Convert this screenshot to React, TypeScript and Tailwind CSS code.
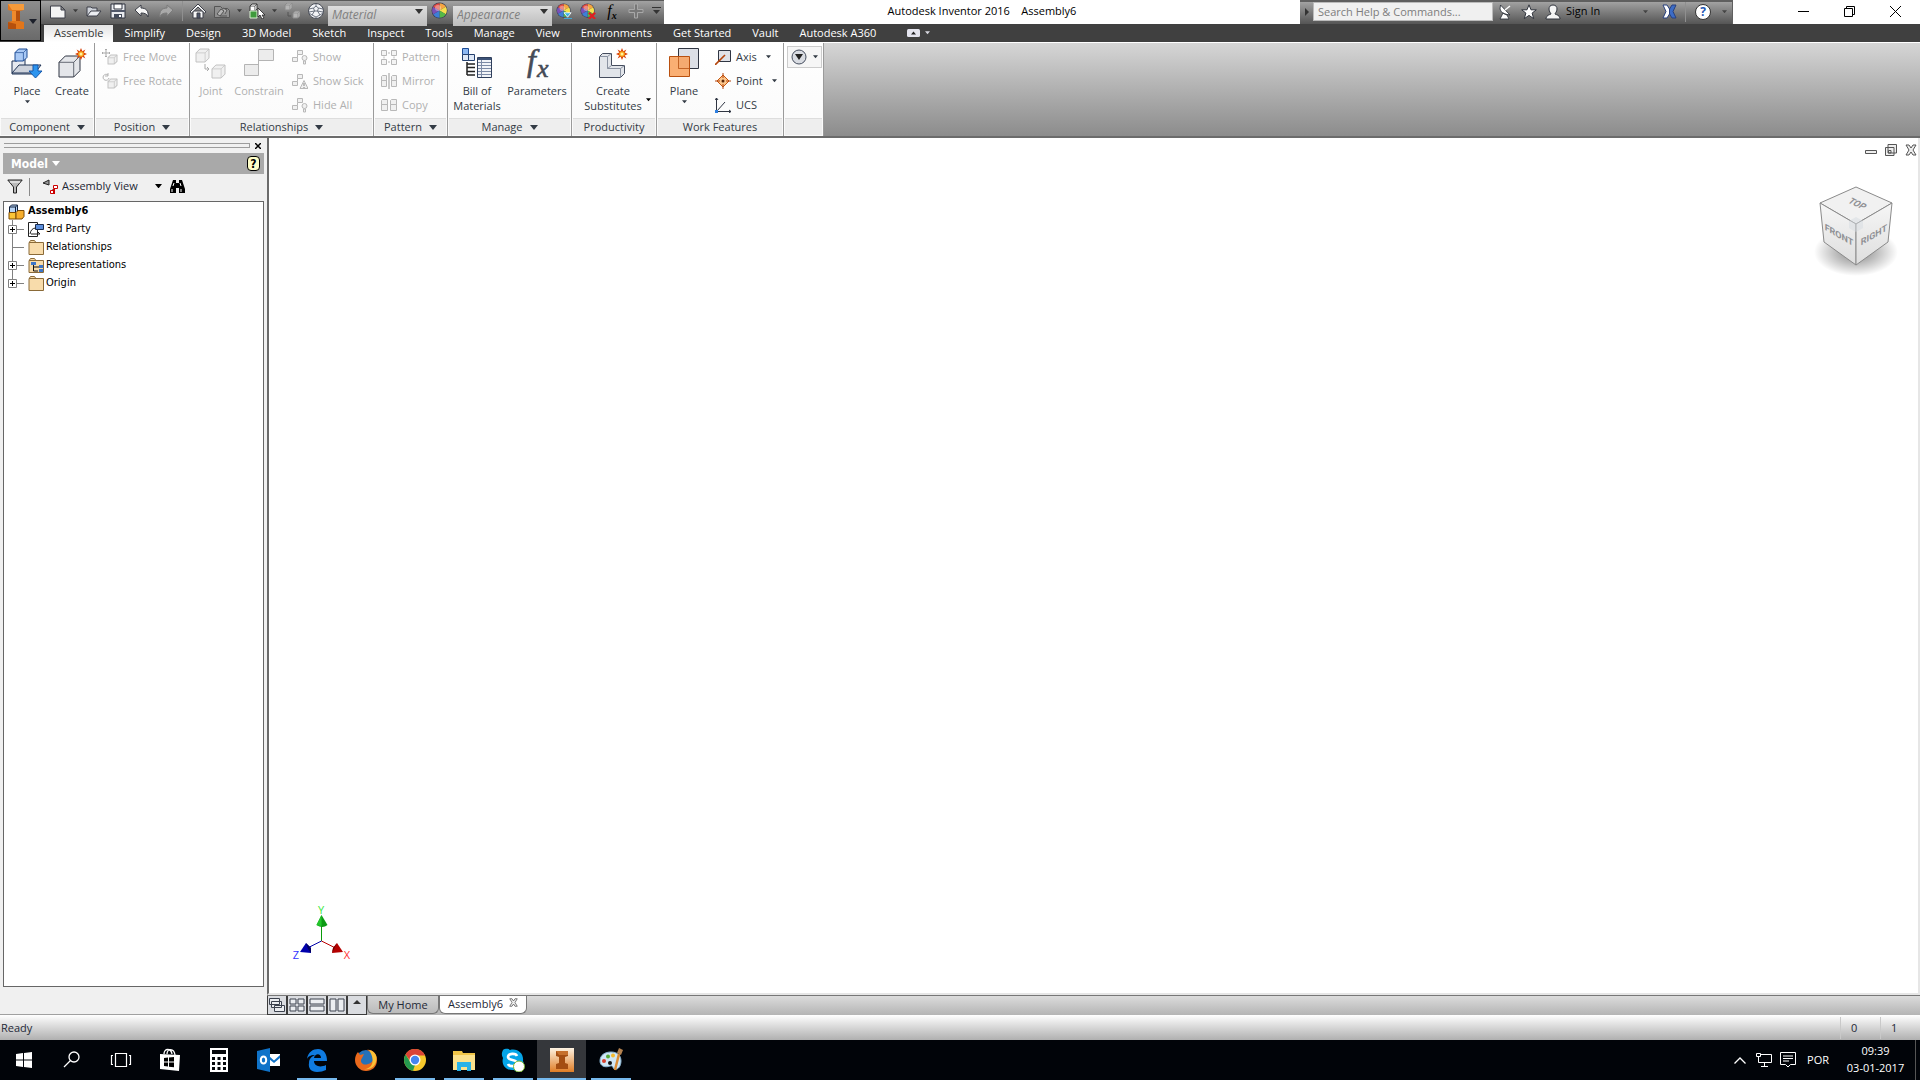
import type { ReactNode } from 'react'
import clsx from 'clsx'

const tabs = [
  'Assemble', 'Simplify', 'Design', '3D Model', 'Sketch', 'Inspect', 'Tools', 'Manage',
  'View', 'Environments', 'Get Started', 'Vault', 'Autodesk A360',
]

/* ---------- small shared pieces ---------- */

function Caret({ size = 6, className = '' }: { size?: number; className?: string }) {
  return (
    <svg width={size} height={size / 2 + 1} viewBox="0 0 8 5" className={clsx('shrink-0', className)}>
      <path d="M0 0h8L4 5z" fill="currentColor" />
    </svg>
  )
}

function Burst({ x, y }: { x: number; y: number }) {
  return (
    <g transform={`translate(${x} ${y})`}>
      <path d="M0-6 1.4-2.8 4.4-4.4 2.8-1.4 6 0 2.8 1.4 4.4 4.4 1.4 2.8 0 6-1.4 2.8-4.4 4.4-2.8 1.4-6 0-2.8-1.4-4.4-4.4-1.4-2.8z" fill="#d9420b" />
      <circle r="2.8" fill="#f9a61a" />
      <circle r="1.5" fill="#fff3a0" />
    </g>
  )
}

function Cube({ x, y, s, stroke = '#c2c2c2', fill = '#f0f0f0' }: { x: number; y: number; s: number; stroke?: string; fill?: string }) {
  return (
    <g transform={`translate(${x} ${y}) scale(${s})`} fill={fill} stroke={stroke} strokeWidth={1 / s} strokeLinejoin="round">
      <path d="M0 3 3 0h7v7l-3 3H0z" />
      <path d="M0 3h7l3-3M7 3v7" fill="none" opacity=".7" />
    </g>
  )
}

function Wheel({ size = 18, children }: { size?: number; children?: ReactNode }) {
  return (
    <svg width={size} height={size} viewBox="0 0 18 18" className="shrink-0">
      <circle cx="8.5" cy="8.5" r="8" fill="#3a3f52" />
      <path d="M8.5 8.5V1.2a7.3 7.3 0 0 1 6.3 3.6z" fill="#f7a541" />
      <path d="M8.5 8.5l6.3-3.7a7.3 7.3 0 0 1 0 7.4z" fill="#f6e04d" />
      <path d="M8.5 8.5l6.3 3.7a7.3 7.3 0 0 1-6.3 3.6z" fill="#55b947" />
      <path d="M8.5 8.5v7.3a7.3 7.3 0 0 1-6.3-3.6z" fill="#3e7fd6" />
      <path d="M8.5 8.5l-6.3 3.7a7.3 7.3 0 0 1 0-7.4z" fill="#7a51b8" />
      <path d="M8.5 8.5L2.2 4.8a7.3 7.3 0 0 1 6.3-3.6z" fill="#e34b43" />
      <circle cx="7" cy="6" r="3" fill="#fff" opacity=".35" />
      {children}
    </svg>
  )
}

/* ---------- quick access toolbar ---------- */

const qatIcons: Record<string, ReactNode> = {
  New: <path d="M.5 3h10.500l4 4v8H.5zM11 3v4h4" fill="#f4f4f4" stroke="#3c3f48" />,
  Open: (
    <g stroke="#3c3f48" strokeLinejoin="round">
      <path d="M1 13V4h4l1 1h5v3" fill="#cfd3da" />
      <path d="M1 13 5 8h10l-4 5z" fill="#eceef2" />
    </g>
  ),
  Save: (
    <g>
      <path d="M1 1h14v14H1z" fill="#e8eaee" stroke="#2f333f" />
      <path d="M4 1h8v5H4z" fill="#fff" stroke="#2f333f" />
      <path d="M1 7h14v2H1z" fill="#51586a" />
      <path d="M4 11h8v4H4z" fill="#444b5b" />
      <path d="M9 12h2v2H9z" fill="#fff" />
    </g>
  ),
  Undo: <path d="M1 7l6-5v3c5 0 8 3 7 9-1-3-3-4-7-4v3z" fill="#f6f6f6" stroke="#3c3f48" strokeLinejoin="round" />,
  Redo: <path d="M15 7L9 2v3c-5 0-8 3-7 9 1-3 3-4 7-4v3z" fill="#a9a9a9" stroke="#7b7b7b" strokeLinejoin="round" />,
  Home: (
    <g stroke="#3c3f48" strokeLinejoin="round">
      <path d="M3 8h10v7H3z" fill="#f6f6f6" />
      <path d="M8 1l8 8-1.500 1L8 4 1.500 10 0 9z" fill="#fff" />
      <path d="M7 10h3v5H7z" fill="#4e566b" />
    </g>
  ),
  Update: (
    <g stroke="#555">
      <path d="M.5 3.500h6l2 2h5l2 2v7H.5z" fill="#909090" />
      <path d="M3 11l4-5 3 2-4 5zM9 5l4 2-2 4M6 13h7" fill="#b4b4b4" />
    </g>
  ),
  Select: (
    <g>
      <Cube x={1} y={1} s={0.7} stroke="#333" fill="#fff" />
      <path d="M1 8h7v7H1z" fill="#3f9a3c" stroke="#d8f0d0" />
      <path d="M9 5v9l2-2 2 4 2-1-2-3h3z" fill="#fff" stroke="#222" strokeWidth=".8" />
    </g>
  ),
  Relationship: (
    <g>
      <Cube x={1} y={0} s={0.7} stroke="#8b8b8b" fill="#b5b5b5" />
      <Cube x={9} y={8} s={0.7} stroke="#8b8b8b" fill="#b5b5b5" />
      <path d="M4 9v4h3" stroke="#555" fill="none" />
    </g>
  ),
  Sphere: (
    <g>
      <circle cx="8" cy="8" r="7.500" fill="#f2f3f6" stroke="#4a4e58" />
      <path d="M5.500 5L8 3.200 10.500 5l-1 3h-3zM1 6l4.500-1M8 3.200V.8M10.500 5L15 6M9.500 8l2.500 4M6.500 8L4 12M4 12l-3-2M12 12l3-2M4 12l4 2 4-2M8 14v1.500M6.500 8L1 9M9.500 8l5.500 1" stroke="#5f6674" fill="none" strokeWidth=".9" />
    </g>
  ),
}

function QatButton({ name, menu }: { name: string; menu?: boolean }) {
  return (
    <button aria-label={name} className="flex items-center">
      <span className="flex w-6 justify-center">
        <svg width="16" height="16" viewBox="0 0 16 16">{qatIcons[name]}</svg>
      </span>
      {menu && <span className="flex w-[11px] justify-center text-[#3c3c3c]"><Caret size={5} /></span>}
    </button>
  )
}

function StyleSelect({ label }: { label: string }) {
  return (
    <div className="relative h-5 w-[99px]">
      <select
        aria-label={label}
        className="h-full w-full appearance-none bg-linear-to-b from-[#dedede] to-[#bdbdbd] pb-0.5 pl-1 text-xs leading-4 italic text-[#808080]"
      >
        <option>{label}</option>
      </select>
      <Caret size={8} className="pointer-events-none absolute top-2 right-1 text-[#333]" />
    </div>
  )
}

function QuickAccess() {
  return (
    <div className="flex h-6 w-[623px] items-center border-t border-[#5a5a5a] bg-linear-to-b from-[#a2a2a2] to-[#5b5b5b] pb-[3px] pl-[5px]">
      <QatButton name="New" menu />
      <span className="w-px" />
      <QatButton name="Open" />
      <QatButton name="Save" />
      <QatButton name="Undo" />
      <QatButton name="Redo" />
      <span className="mr-[3px] ml-1 h-5 w-px bg-[#8f8f8f]" />
      <QatButton name="Home" />
      <QatButton name="Update" menu />
      <QatButton name="Select" menu />
      <QatButton name="Relationship" />
      <QatButton name="Sphere" />
      <StyleSelect label="Material" />
      <button aria-label="Color" className="flex w-[26px] justify-center"><Wheel /></button>
      <StyleSelect label="Appearance" />
      <button aria-label="Adjust" className="flex w-6 justify-center">
        <Wheel size={16}><path d="M9 11h8l-4 5z" fill="#39b2e6" stroke="#fff" /><path d="M9 17.500h9" stroke="#39b2e6" /></Wheel>
      </button>
      <button aria-label="Clear" className="flex w-6 justify-center">
        <Wheel size={16}><path d="M10 11l7 7M17 11l-7 7" stroke="#e02020" strokeWidth="2.500" /></Wheel>
      </button>
      <button aria-label="Parameters" className="w-6 font-['Liberation_Serif'] text-base leading-none text-black italic">f<sub className="text-[10px] font-bold">x</sub></button>
      <button aria-label="Add" className="flex w-6 justify-center">
        <svg width="16" height="16" viewBox="0 0 16 16"><path d="M6.500 1h3v5.500H15v3H9.500V15h-3V9.500H1v-3h5.500z" fill="#777" stroke="#a8a8a8" /></svg>
      </button>
      <button aria-label="Customize" className="flex w-4 justify-center">
        <svg width="9" height="8" viewBox="0 0 9 8"><path d="M0 .5h9" stroke="#333" /><path d="M1 3h7L4.500 7z" fill="#333" /></svg>
      </button>
    </div>
  )
}

function InfoCenter() {
  return (
    <div className="flex h-6 w-[433px] items-center border-t-2 border-r border-[#5f5f5f] bg-linear-to-b from-[#a2a2a2] to-[#555] pb-[3px]">
      <span className="flex w-[13px] justify-center"><svg width="4" height="8"><path d="M0 0v8l4-4z" fill="#333" /></svg></span>
      <input
        type="text"
        aria-label="Search"
        placeholder="Search Help &amp; Commands..."
        className="h-[19px] w-[180px] border border-[#bbb] bg-[#f0f0f0] px-1 text-[11px] placeholder:text-[#7d7d7d]"
      />
      <button aria-label="Communication Center" className="flex w-6 justify-center">
        <svg width="14" height="16" viewBox="0 0 14 16" fill="#fff" stroke="#30343d" strokeWidth=".9"><path d="M5 9l-3 6h9l-2-4zM2.500 1q-3 9 9.500 10z" /><path d="M7 6l5-4" stroke="#fff" strokeWidth="1.500" /></svg>
      </button>
      <button aria-label="Favorites" className="flex w-6 justify-center">
        <svg width="16" height="16" viewBox="0 0 16 16"><path d="M8 .8l2 5h5.300l-4.200 3.300 1.600 5.500L8 11.400l-4.700 3.200 1.600-5.500L.7 5.800H6z" fill="#fff" stroke="#30343d" /></svg>
      </button>
      <button className="flex items-center gap-[5px] pl-1 text-[11px] text-black">
        <svg width="16" height="16" viewBox="0 0 16 16" fill="#f4f4f4" stroke="#30343d"><path d="M8 1c3 0 4 2 4 4 0 3-2 4-2 5 2 1 4 1 5 4v1H1v-1c1-3 3-3 5-4 0-1-2-2-2-5 0-2 1-4 4-4z" /></svg>
        Sign In
      </button>
      <span className="ml-auto flex w-3 justify-center text-[#444]"><Caret size={5} /></span>
      <button aria-label="Exchange Apps" className="ml-1 flex w-7 justify-center">
        <svg width="15" height="15" viewBox="0 0 15 15"><path d="M1 1h4l2.500 4v5L5 14H1l3-6.500z" fill="#fff" stroke="#28407e" /><path d="M14 1h-4L7.500 5v5L10 14h4l-3-6.500z" fill="#3c6cc6" stroke="#28407e" /></svg>
      </button>
      <span className="mr-1 ml-0.5 h-5 w-px bg-[#8f8f8f]" />
      <button aria-label="Help" className="flex items-center">
        <span className="mx-[5px] flex size-4 items-center justify-center rounded-full border border-[#333] bg-white text-xs font-bold text-[#2457b5]">?</span>
        <span className="flex w-4 justify-center text-[#444]"><Caret size={5} /></span>
      </button>
    </div>
  )
}

function Header() {
  return (
    <header className="flex bg-[#404040]">
      <button aria-label="Application menu" className="flex h-[41px] w-[41px] items-start gap-1 border border-black bg-linear-to-b from-[#8d8d8d] to-[#6a6a6a] pt-0.5 pl-1.5 text-[#1b1f2a]">
        <svg width="18" height="27" viewBox="0 0 18 27">
          <path d="M1 1h16v6l-4 1v10l4 1v7H1v-7l4-1V8L1 7z" fill="#e2761b" />
          <path d="M1 1h16v6H5z" fill="#f59a3a" />
          <path d="M9 8h4v10H9zM1 19l8 2v5H1z" fill="#b6500d" />
          <path d="M5 8h4v10H5z" fill="#f08a2c" />
        </svg>
        <Caret size={8} className="mt-4" />
      </button>
      <div className="min-w-0 flex-1">
        <div className="flex h-6 bg-white">
          <QuickAccess />
          <h1 className="flex-1 text-center text-[11px] leading-[22px] whitespace-pre text-black">Autodesk Inventor 2016    Assembly6</h1>
          <InfoCenter />
          <div className="ml-[47px] flex pr-0.5 pb-0.5">
            <button aria-label="Minimize" className="flex w-[46px] items-center justify-center"><svg width="11" height="11"><path d="M0 5.500h11" stroke="#000" /></svg></button>
            <button aria-label="Restore" className="flex w-[46px] items-center justify-center"><svg width="11" height="11" fill="none" stroke="#000"><path d="M.5 2.500h8v8h-8zM2.500 2.500v-2h8v8h-2" /></svg></button>
            <button aria-label="Close" className="flex w-[46px] items-center justify-center"><svg width="11" height="11"><path d="M0 0l11 11M11 0L0 11" stroke="#000" /></svg></button>
          </div>
        </div>
        <nav className="flex h-[18px] items-end gap-px pl-[3px] text-[11px] leading-[15px]">
          {tabs.map((tab, i) => (
            <button
              key={tab}
              className={clsx('px-2.5 pb-0.5 whitespace-nowrap', i === 0 ? 'bg-linear-to-b from-[#e4e4e4] to-white text-[#333]' : 'text-white')}
            >
              {tab}
            </button>
          ))}
          <button aria-label="Minimize ribbon" className="flex h-[18px] items-center gap-[5px] pl-5 text-[#d8d8e0]">
            <svg width="13" height="8" viewBox="0 0 13 8"><rect width="13" height="8" rx="1.500" fill="#e4e4ee" /><path d="M4 5.500h5L6.500 2.500z" fill="#222" /></svg>
            <Caret size={5} />
          </button>
        </nav>
      </div>
    </header>
  )
}

/* ---------- ribbon ---------- */

const smallIcons: Record<string, ReactNode> = {
  'Free Move': <><Cube x={6} y={6} s={0.9} /><path d="M4 0v8M0 4h8M3 1l1-1 1 1M3 7l1 1 1-1M1 3L0 4l1 1M7 3l1 1-1 1" stroke="#a9a9a9" fill="none" /></>,
  'Free Rotate': <><Cube x={6} y={6} s={0.9} /><path d="M6 2a3 3 0 1 0 1 3M6 0v3H3" stroke="#b3b3b3" fill="none" /></>,
  Show: <Link><circle cx="12.500" cy="9" r="2.500" /><path d="M11.500 12h2v3h-2z" /></Link>,
  'Show Sick': <Link><path d="M12 7.500l4 8H8z" /><path d="M12 10v3M12 14v1" stroke="#888" /></Link>,
  'Hide All': <Link><circle cx="12.500" cy="9" r="2.500" /><path d="M11.500 12h2v3h-2z" /></Link>,
  Pattern: <g fill="#f4f4f4" stroke="#b8b8b8"><path d="M.5 1.500h5v5h-5zM10.500 1.500h5v5h-5zM.5 10.500h5v5h-5zM10.500 10.500h5v5h-5zM7 4h2M3 7.500v2M7 13h2M13 7.500v2" /></g>,
  Mirror: <g fill="#f0f0f0" stroke="#b8b8b8"><path d="M.5 7.500v-4l1-1h4v5zM.5 7.500h5v6h-5zM10.500 7.500v-4l1-1h4v5zM10.500 7.500h5v6h-5z" /><path d="M8 0v16" stroke="#999" /></g>,
  Copy: <g fill="#f0f0f0" stroke="#b8b8b8"><path d="M.5 7.500v-4l1-1h5v5zM.5 7.500h6v6h-6zM9.500 7.500v-4l1-1h5v5zM9.500 7.500h6v6h-6z" /></g>,
  Axis: <><path d="M3.500 1.500h12v11h-12z" fill="#e0e2e8" stroke="#2f3542" /><path d="M0 16L10 6" stroke="#b4450c" strokeWidth="1.600" /></>,
  Point: <><path d="M8 2l6 6-6 6-6-6z" fill="#fbc58b" stroke="#c6560e" /><path d="M8 0v5M8 11v5M0 8h5M11 8h5" stroke="#b4450c" /><circle cx="8" cy="8" r="1.500" fill="#5a2406" /></>,
  UCS: <><path d="M1.500 1v13.500H16M0 3l1.500-2L3 3M14 13l2 1.500-2 1.500M2 14l8-9" stroke="#2f3542" fill="none" /><path d="M0 13h3v3H0z" fill="#2e7fe0" /></>,
}

function Link({ children }: { children: ReactNode }) {
  return (
    <g fill="#f0f0f0" stroke="#b8b8b8">
      <path d="M5.500 1.500h5v4h-5zM.5 8.500h5v4h-5zM5.500 5.500v3" />
      {children}
    </g>
  )
}

function SmallButton({ name, menu, disabled = true }: { name: string; menu?: boolean; disabled?: boolean }) {
  return (
    <button className={clsx('flex h-6 items-center gap-[5px] whitespace-nowrap', disabled ? 'text-[#b0b0b0]' : 'text-[#333b45]')} disabled={disabled}>
      <svg width="16" height="16" viewBox="0 0 16 16" className="shrink-0">{smallIcons[name]}</svg>
      {name}
      {menu && <Caret size={5} className="ml-1" />}
    </button>
  )
}

function LargeButton({ label, icon, width, disabled, menu }: { label: string; icon: ReactNode; width: string; disabled?: boolean; menu?: boolean }) {
  return (
    <button className={clsx('flex flex-col items-center leading-[15px] whitespace-pre-line', width, disabled ? 'text-[#b0b0b0]' : 'text-[#333b45]')} disabled={disabled}>
      <svg width="32" height="32" viewBox="0 0 32 32" className="mt-[5px] mb-[3px] shrink-0 overflow-visible">{icon}</svg>
      {label}
      {menu && <Caret size={5} className="mt-0.5" />}
    </button>
  )
}

function Panel({ title, width, menu = true, children }: { title: string; width: string; menu?: boolean; children?: ReactNode }) {
  return (
    <section className={clsx('flex shrink-0 flex-col border-r border-[#9b9b9b] bg-linear-to-b from-white to-[#fafafa]', width)}>
      <div className="flex h-[75px] text-[11px]">{children}</div>
      <div className="mx-px flex h-[17px] items-center justify-center gap-[7px] border-t border-[#ddd] bg-[#eee] text-[11px] text-[#333b45]">
        {title}
        {menu && <Caret size={8} />}
      </div>
    </section>
  )
}

function Ribbon() {
  return (
    <div className="flex h-[96px] border-t border-b-2 border-t-white border-b-[#6b6b6b] bg-linear-to-b from-[#d6d6d6] to-[#8c8c8c]">
      <Panel title="Component" width="w-[95px]">
        <LargeButton
          label="Place" menu width="ml-1 w-[46px]"
          icon={
            <>
              <path d="M1 13h5v-2h8v7h14l-6 8H1z" fill="#e6e9ef" stroke="#1f3354" />
              <path d="M1 25l7-8h22l-6 8z" fill="#cdd2db" stroke="#1f3354" />
              <Cube x={4} y={1} s={1.2} stroke="#1b4a94" fill="#a9c9f5" />
              <path d="M22 17h5v6h4l-6.500 7L18 23h4z" fill="#2d95ef" stroke="#1559ad" />
            </>
          }
        />
        <LargeButton label="Create" width="w-11" icon={<><Cube x={3} y={8} s={2.1} stroke="#2f3542" fill="#e4e6ea" /><Burst x={25} y={6} /></>} />
      </Panel>
      <Panel title="Position" width="w-[95px]">
        <div className="pt-0.5 pl-[7px]">
          <SmallButton name="Free Move" />
          <SmallButton name="Free Rotate" />
        </div>
      </Panel>
      <Panel title="Relationships" width="w-[184px]">
        <LargeButton
          label="Joint" disabled width="w-[42px]"
          icon={<><Cube x={1} y={1} s={1.3} /><Cube x={17} y={17} s={1.3} /><path d="M10 16v5h4M12 19l2 2-2 2" stroke="#aaa" fill="none" /></>}
        />
        <LargeButton
          label="Constrain" disabled width="w-[54px]"
          icon={<g fill="#ececec" stroke="#b4b4b4"><path d="M15.500 1.500h15v11h-15zM1.500 16.500h14v11h-14zM15.500 12v5" /></g>}
        />
        <div className="pt-0.5 pl-1.5">
          <SmallButton name="Show" />
          <SmallButton name="Show Sick" />
          <SmallButton name="Hide All" />
        </div>
      </Panel>
      <Panel title="Pattern" width="w-[74px]">
        <div className="pt-0.5 pl-[7px]">
          <SmallButton name="Pattern" />
          <SmallButton name="Mirror" />
          <SmallButton name="Copy" />
        </div>
      </Panel>
      <Panel title="Manage" width="w-[124px]">
        <LargeButton
          label={'Bill of\nMaterials'} width="w-[58px]"
          icon={
            <>
              <path d="M1.500.5h6v6h-6z" fill="#8db8f2" stroke="#1b4a94" />
              <path d="M1.500 6.500h6v6h-6zM7.500 6.500h6v6h-6z" fill="#dfe8f6" stroke="#24406e" />
              <path d="M6 14v13M6 16h8M6 19.500h8M6 23.500h8M6 27h8" stroke="#222" strokeWidth="1.500" />
              <path d="M16.500 9.500h14v20h-14z" fill="#f2f4f8" stroke="#2f3f5c" />
              <path d="M17 10h13v2H17z" fill="#3c5277" />
              <path d="M17 14.500h13M17 17.500h13M17 20.500h13M17 23.500h13M17 26.500h13M20.500 12v17" stroke="#7d8ba6" />
            </>
          }
        />
        <LargeButton
          label="Parameters" width="w-[62px]"
          icon={<g fill="#454b57" stroke="#454b57" strokeWidth=".6" className="font-['Liberation_Serif'] italic"><text x="6" y="23" fontSize="32">f</text><text x="16" y="29" fontSize="26">x</text></g>}
        />
      </Panel>
      <Panel title="Productivity" menu={false} width="w-[85px]">
        <LargeButton
          label={'Create\nSubstitutes'} width="ml-2 w-[66px]"
          icon={<><path d="M2.500 8.500l3-3h9v12h13v8l-4 4h-21z" fill="#e2e5ea" stroke="#454d5e" /><path d="M2.500 8.500h8v12h13v9M10.500 8.500l4-3M10.500 20.500l4-3M23.500 20.500l4-3" fill="none" stroke="#8b93a2" /><Burst x={25} y={6} /></>}
        />
        <Caret size={5} className="mt-[55px]" />
      </Panel>
      <Panel title="Work Features" menu={false} width="w-[127px]">
        <LargeButton
          label="Plane" menu width="ml-1 w-[46px]"
          icon={<><path d="M10.500.5h20v20h-20z" fill="#dcdfe6" stroke="#2f3542" /><path d="M1.500 8.500h20v20h-20z" fill="#f9a15a" fillOpacity=".85" stroke="#b9500f" /><path d="M10.500 8.500v12h11" fill="none" stroke="#b9500f" opacity=".7" /></>}
        />
        <div className="pt-0.5 pl-2">
          <SmallButton name="Axis" menu disabled={false} />
          <SmallButton name="Point" menu disabled={false} />
          <SmallButton name="UCS" disabled={false} />
        </div>
      </Panel>
      <Panel title="" menu={false} width="w-10">
        <button aria-label="Finish" className="mt-[3px] ml-[3px] flex h-[22px] w-[35px] items-center justify-center gap-1.5 border border-[#ccc] bg-[#f6f6f6] text-[#333b45]">
          <svg width="16" height="16" viewBox="0 0 16 16"><circle cx="8" cy="8" r="7" fill="#d9dce2" stroke="#454d5e" /><path d="M4 5h8l-4 6z" fill="#222" /></svg>
          <Caret size={5} />
        </button>
      </Panel>
    </div>
  )
}

/* ---------- model browser ---------- */

const folder = (
  <>
    <path d="M1.500 4V3l1-1.500h4l1 1.500v1" fill="#f8ddab" stroke="#8a6a38" />
    <path d="M1 3.500h14.500v12H1z" fill="#f8dcab" stroke="#8a6a38" />
  </>
)

const treeRows: { label: string; expandable: boolean; icon: ReactNode }[] = [
  {
    label: '3rd Party',
    expandable: true,
    icon: <><path d="M.5 1.500h9v14h-9z" fill="#fff" stroke="#222" /><path d="M7.500 3.500h8v5h-8z" fill="#5d8fdc" stroke="#1b2d4e" /><path d="M2 13q1-6 6-6M3 13h9l-3-3" stroke="#222" fill="none" /></>,
  },
  { label: 'Relationships', expandable: false, icon: folder },
  {
    label: 'Representations',
    expandable: true,
    icon: <>{folder}<path d="M3 5h5v3H3zM11 8h4v3h-4zM11 12h4v3h-4z" fill="#3d76c9" /><path d="M5.500 8v6H10M6 10h5" stroke="#111" fill="none" /></>,
  },
  { label: 'Origin', expandable: true, icon: folder },
]

function Branch({ expandable, last }: { expandable: boolean; last: boolean }) {
  return (
    <svg width="24" height="18" viewBox="0 0 24 18" fill="none" stroke="#808080">
      <path d={last ? 'M8.500 0v9' : 'M8.500 0v18'} />
      <path d="M8 9.500h12" />
      {expandable && <><path d="M4.500 5.500h8v8h-8z" fill="#fff" /><path d="M6 9.500h5M8.500 7v5" stroke="#000" /></>}
    </svg>
  )
}

function ModelBrowser() {
  return (
    <aside className="flex w-[267px] shrink-0 flex-col border-b border-[#a0a0a0] bg-[#f0f0f0] pr-[3px] pb-[27px] pl-[3px] font-['DejaVu_Sans_Condensed'] text-[11px] text-black">
      <div className="flex h-[15px] items-center">
        <span className="ml-px h-[5px] flex-1 border-y border-r border-[#9c9c9c]" />
        <button aria-label="Close panel" className="mr-[3px] ml-[5px]"><svg width="6" height="6"><path d="M0 0l6 6M6 0L0 6" stroke="#000" strokeWidth="1.500" /></svg></button>
      </div>
      <div className="flex h-[21px] items-center justify-between bg-[#a9a9a9] pr-1 pl-2 text-white">
        <button className="flex items-center gap-1 text-xs font-bold">Model<Caret size={8} /></button>
        <button aria-label="Help" className="flex h-[15px] w-[13px] items-center justify-center rounded-sm border border-black bg-[#ffffc8] text-xs font-bold text-black">?</button>
      </div>
      <div className="flex h-[27px] items-center pb-0.5">
        <button aria-label="Filter" className="ml-1">
          <svg width="16" height="15" viewBox="0 0 16 15" fill="#b9b9b9" stroke="#222"><path d="M.8 1h14.400L9.500 8v6h-3V8z" /><path d="M3 3h10" stroke="#fff" /></svg>
        </button>
        <span className="mx-1.5 h-[18px] w-px bg-[#8a8a8a]" />
        <svg width="17" height="16" viewBox="0 0 17 16" className="ml-1.5 shrink-0"><path d="M1 4l6-3v5z" fill="#999" stroke="#222" /><path d="M8 13h3v-3" stroke="#222" fill="none" /><path d="M8.500 11.500h3v3h-3zM11.500 6.500h4v3h-4z" fill="#fff" stroke="#c00" /><path d="M12 10v5" stroke="#c00" strokeWidth="2" /></svg>
        <div className="relative ml-[3px]">
          <select aria-label="Browser view" className="w-[100px] appearance-none bg-transparent font-['Open_Sans'] text-[11px] text-[#1d2733]">
            <option>Assembly View</option>
          </select>
          <Caret size={7} className="pointer-events-none absolute top-1.5 right-0" />
        </div>
        <button aria-label="Find" className="ml-2">
          <svg width="15" height="14" viewBox="0 0 15 14"><path d="M3 0h3v3h3V0h3l3 9v4H9V8H6v5H0V9z" fill="#000" /><path d="M2 9v3M11 9v3M4 3L3 6M10 3l1 3" stroke="#fff" /></svg>
        </button>
      </div>
      <div className="flex-1 border border-[#666] bg-white pt-px">
        <div className="flex h-[17px] items-center gap-[3px] pl-1 font-bold">
          <svg width="17" height="16" viewBox="0 0 17 16" className="shrink-0" strokeLinejoin="round">
            <path d="M1.500 8V3l2-2h6v7" fill="#b7d3f4" stroke="#10203c" />
            <path d="M1.500 3h6V8M7.500 3l2-2" fill="none" stroke="#10203c" />
            <path d="M1 8.500h7v6.500H1z" fill="#fbc437" stroke="#7c4a06" />
            <path d="M8 8.500l2-2h6v6L14 15H8z" fill="#f7ae2c" stroke="#7c4a06" />
          </svg>
          Assembly6
        </div>
        <ul>
          {treeRows.map((row, i) => (
            <li key={row.label} className="flex h-[18px] items-center">
              {row.expandable
                ? <button aria-label={`Expand ${row.label}`}><Branch expandable last={i === treeRows.length - 1} /></button>
                : <Branch expandable={false} last={false} />}
              <svg width="16" height="16" viewBox="0 0 16 16" className="mr-0.5 shrink-0">{row.icon}</svg>
              {row.label}
            </li>
          ))}
        </ul>
      </div>
    </aside>
  )
}

/* ---------- drawing area ---------- */

function ViewCube() {
  return (
    <svg width="110" height="120" viewBox="0 0 110 120" className="absolute top-10 right-1.5">
      <defs>
        <radialGradient id="shadow"><stop offset="0" stopColor="#000" stopOpacity=".5" /><stop offset="1" stopColor="#000" stopOpacity="0" /></radialGradient>
        <linearGradient id="face" x1="0" y1="0" x2="0" y2="1"><stop offset="0" stopColor="#f6f6f6" /><stop offset="1" stopColor="#dedede" /></linearGradient>
      </defs>
      <ellipse cx="54" cy="74" rx="42" ry="24" fill="url(#shadow)" />
      <g stroke="#8a8a8a" strokeLinejoin="round">
        <path d="M54 9l36 16-36 21L18 25z" fill="#f1f1f1" />
        <path d="M18 25l36 21v41L22 64z" fill="url(#face)" />
        <path d="M90 25L54 46v41l32-23z" fill="url(#face)" />
      </g>
      <path d="M54 39l7 4v7l-7 4-7-4v-7z" fill="#d5dbe2" opacity=".5" />
      <g fill="#8f9094" className="font-['Roboto'] text-[9px] font-bold" textAnchor="middle">
        <text transform="translate(53 28) rotate(26) skewX(-20)">TOP</text>
        <text transform="translate(37 60) skewY(30)">FRONT</text>
        <text transform="translate(72 60) skewY(-30)">RIGHT</text>
      </g>
    </svg>
  )
}

function Triad() {
  return (
    <svg width="70" height="62" viewBox="0 0 70 62" className="absolute bottom-7.5 left-5">
      <path d="M32.500 40V20" stroke="#0a9b0a" />
      <path d="M32.500 40l14 7" stroke="#b00" />
      <path d="M32.500 40l-14 7" stroke="#00a" />
      <path d="M32.500 14l6 10q-5 4-11 0z" fill="#0c9a14" />
      <path d="M32.500 14v11q-3 0-5-1z" fill="#22c52a" />
      <path d="M54 51l-11 1 1-5 4-5z" fill="#b40000" />
      <path d="M43 52l1-5 4-5-3 6z" fill="#6d0000" />
      <path d="M11 51l11 1v-5l-5-5z" fill="#0000ac" />
      <path d="M22 52v-5l-5-5 2 6z" fill="#000060" />
      <g className="font-['Open_Sans'] text-[11px]" textAnchor="middle">
        <text x="32" y="13" fill="#3be83b">Y</text>
        <text x="58" y="58" fill="#f33">X</text>
        <text x="7" y="58" fill="#33f">Z</text>
      </g>
    </svg>
  )
}

const layouts: [string, ReactNode][] = [
  ['Cascade', <path d="M.5 1.500h10v6H.5zM2.500 4.500h10v6h-10zM5.500 8.500h10v6h-10z" />],
  ['Arrange', <path d="M1 2h6v5H1zM9 2h6v5H9zM1 9h6v5H1zM9 9h6v5H9z" />],
  ['Tile Horizontally', <path d="M1 2h14v5H1zM1 9h14v5H1z" />],
  ['Tile Vertically', <path d="M1 2h6v12H1zM9 2h6v12H9z" />],
  ['More', <path d="M4 7h8L8 3z" fill="#333" stroke="none" />],
]

function DocumentArea() {
  return (
    <main className="flex min-w-0 flex-1 flex-col">
      <div className="relative flex-1 border-r-2 border-b-2 border-l-2 border-r-[#e6e6e6] border-b-[#e6e6e6] border-l-[#6b6b6b] bg-white">
        <div className="flex justify-end gap-2 pt-[5px] pr-px">
          <button aria-label="Minimize document"><svg width="12" height="12" className="mt-px"><path d="M.5 6.500h11v3H.5z" fill="#eee" stroke="#555" /></svg></button>
          <button aria-label="Restore document"><svg width="12" height="12" fill="#eee" stroke="#555"><path d="M3 .5h8.500V9H3zM.5 3.500H9v8H.5zM3.500 6.500h2.500v2.500H3.500z" /></svg></button>
          <button aria-label="Close document"><svg width="12" height="12" viewBox="0 0 12 12"><path d="M1 1h3l2 3 2-3h3L8 6l3 5H8L6 8l-2 3H1l3-5z" fill="#eee" stroke="#555" /></svg></button>
        </div>
        <ViewCube />
        <Triad />
      </div>
      <div className="flex h-5 border-t border-[#777] bg-linear-to-b from-[#dcdcdc] to-[#b4b4b4] text-[11px] text-[#1f2937]">
        {layouts.map(([name, icon]) => (
          <button key={name} aria-label={name} className="flex w-5 items-center justify-center border-r border-b border-l border-[#3c3c3c] bg-[#dadce0]">
            <svg width="16" height="16" viewBox="0 0 16 16" fill="#eceef1" stroke="#3c424e">{icon}</svg>
          </button>
        ))}
        <button className="h-[18px] w-[72px] rounded-b-md border border-t-0 border-[#777] bg-linear-to-b from-[#d4d4d4] to-[#bbb] leading-[17px]">My Home</button>
        <button className="flex h-[18px] w-[88px] items-center gap-1.5 rounded-b-md border border-t-0 border-[#777] bg-white pl-2">
          Assembly6
          <svg width="9" height="9" viewBox="0 0 12 12" className="mb-1"><path d="M1 1h3l2 3 2-3h3L8 6l3 5H8L6 8l-2 3H1l3-5z" fill="#eee" stroke="#555" /></svg>
        </button>
      </div>
    </main>
  )
}

/* ---------- taskbar ---------- */

const apps: { name: string; open?: boolean; active?: boolean; icon: ReactNode }[] = [
  { name: 'Start', icon: <path d="M4 6l7-1v6.500H4zM12 5l8-1v7.500h-8zM4 12.500h7V19l-7-1zM12 12.500h8V20l-8-1z" fill="#fff" /> },
  { name: 'Search', icon: <g fill="none" stroke="#fff" strokeWidth="1.300"><circle cx="14" cy="9" r="5" /><path d="M10.500 12.500L4 19" /></g> },
  { name: 'Task View', icon: <path d="M6.500 5.500h11v13h-11zM4 7.500H2.500v9H4M20 7.500h1.500v9H20" fill="none" stroke="#fff" strokeWidth="1.200" /> },
  {
    name: 'Store',
    icon: <><path d="M2 6l20 1-1 16L2 21z" fill="#fff" /><path d="M6 6c0-6 7-6 8 0M9 6c0-6 7-6 8 1" stroke="#fff" fill="none" strokeWidth="1.300" /><path d="M6 10l4-.5v4H6zM11 9.400l5-.5v4.600h-5zM6 14.500h4v4L6 18zM11 14.500h5v4.700l-5-.5z" fill="#000" /></>,
  },
  {
    name: 'Calculator',
    icon: <><path d="M3 0h18v24H3z" fill="#fff" /><path d="M5 2h14v4H5zM5 9h3v3H5zM10.500 9h3v3h-3zM16 9h3v3h-3zM5 14h3v3H5zM10.500 14h3v3h-3zM16 14h3v3h-3zM5 19h3v3H5zM10.500 19h3v3h-3zM16 19h3v3h-3z" fill="#05070b" /></>,
  },
  {
    name: 'Outlook',
    icon: <><path d="M11 6h13v12H11z" fill="#fff" /><path d="M13 8l5 4.500L24 7v3l-6 5-5-4z" fill="#0f73c9" /><path d="M1 3l13-3v24L1 21z" fill="#0f73c9" /><ellipse cx="7.500" cy="12" rx="2.700" ry="3.600" fill="none" stroke="#fff" strokeWidth="2" /></>,
  },
  {
    name: 'Edge',
    open: true,
    icon: <path d="M2 11C3 4 8 1 13 1c6 0 9 5 9 12H9c0 5 6 7 12 4v5c-3 1-5 2-9 2-6 0-9-4-8-9 0-4 2-6 6-8-5 0-7 2-8 4zm7-1h7c0-5-6-5-7 0z" fill="#0f7be0" />,
  },
  {
    name: 'Firefox',
    icon: <><circle cx="12" cy="12" r="10" fill="#2571b8" /><path d="M13 2c5-1 10 4 10 10 0 7-5 11-11 11S1 18 1 12c0-3 1-6 3-8l2 3 4-1-2 4c-3 4 1 8 6 6 5-1 7-6 4-10-1-2-3-3-5-4z" fill="#e9691c" /><path d="M15 2c6 1 9 6 7 12-2 6-7 8-12 7 8 0 12-8 5-19z" fill="#fbc137" /></>,
  },
  {
    name: 'Chrome',
    open: true,
    icon: <><circle cx="12" cy="12" r="11" fill="#f7c92c" /><path d="M2.500 6.500a11 11 0 0 1 19.500 1H12a5 5 0 0 0-5 5z" fill="#db4437" /><path d="M2.500 6.500L8 15l4 2-2 5.800A11 11 0 0 1 2.500 6.500z" fill="#24994f" /><circle cx="12" cy="12" r="5.500" fill="#fff" /><circle cx="12" cy="12" r="4.200" fill="#4585f0" /></>,
  },
  {
    name: 'File Explorer',
    open: true,
    icon: <><path d="M1 3h9l1 2h12v17H1z" fill="#f0c548" /><path d="M1 7h22v15H1z" fill="#fbe18c" /><path d="M5 14h14v9h-4v-4H9v4H5z" fill="#28b2e8" /></>,
  },
  {
    name: 'Skype',
    open: true,
    icon: <><path d="M2 2c3-2 6-1 7 0 8-2 14 4 13 11 2 4 0 9-4 10-2 1-4 0-5-1C5 23 0 17 2 10c-2-3-1-6 0-8z" fill="#05a5e8" /><path d="M16 8c-1-3-9-3-9 1 0 4 9 2 9 6 0 4-8 4-9 1" fill="none" stroke="#fff" strokeWidth="2.600" /><circle cx="18" cy="18.500" r="5.500" fill="#fff" stroke="#7cb82f" /></>,
  },
  {
    name: 'Inventor',
    open: true,
    active: true,
    icon: <><defs><linearGradient id="inv" x1="0" y1="0" x2="0" y2="1"><stop offset="0" stopColor="#fdf3e2" /><stop offset="1" stopColor="#e07d25" /></linearGradient></defs><path d="M0 0h24v24H0z" fill="url(#inv)" /><path d="M6 3h12v5l-3 1v6l3 1v5H6v-5l3-1V9L6 8z" fill="#a44e12" /><path d="M6 3h12v4H9z" fill="#c6702c" /></>,
  },
  {
    name: 'Paint',
    open: true,
    icon: <><path d="M12 4c7 0 10 4 10 9s-3 9-6 8c-3 0-1-4-5-3-5 2-10 0-10-5 0-6 5-9 11-9z" fill="#cfe6f5" stroke="#89b4d2" /><circle cx="5" cy="13" r="2" fill="#d8412e" /><circle cx="9" cy="8.500" r="2" fill="#54a937" /><circle cx="14" cy="7.500" r="2" fill="#f3ba2f" /><circle cx="11" cy="15" r="2" fill="#111" /><path d="M16 22l4-16" stroke="#d98b34" strokeWidth="2.500" /><path d="M18 5l2-5 4 2-2 5z" fill="#b48250" /></>,
  },
]

function Taskbar() {
  return (
    <footer className="flex h-10 bg-[#010409] font-['Open_Sans'] text-[11px] text-white">
      {apps.map((app) => (
        <button key={app.name} aria-label={app.name} className={clsx('flex w-[49px] flex-col items-center first:w-[47px]', app.active && 'bg-[#35373b]')}>
          <svg width="24" height="24" viewBox="0 0 24 24" className="mt-2 mb-1.5">{app.icon}</svg>
          {app.open && <span className={clsx('h-0.5 bg-[#76b9ed]', app.active ? 'w-full' : 'w-10')} />}
        </button>
      ))}
      <div className="ml-auto flex items-center">
        <button aria-label="Show hidden icons" className="flex w-6 justify-center"><svg width="12" height="7"><path d="M.5 6.500L6 1l5.500 5.500" fill="none" stroke="#fff" strokeWidth="1.300" /></svg></button>
        <button aria-label="Network" className="flex w-6 justify-center"><svg width="16" height="14" fill="none" stroke="#fff"><path d="M5 1.500h10.500v8H2.500V6M5 13.500h7M8.500 10v3M.5.500h4v3h-4zM2.500 4v3" /></svg></button>
        <button aria-label="Action Center" className="flex w-6 justify-center"><svg width="16" height="16" fill="none" stroke="#fff"><path d="M.5.500h15v12h-5L8 15l-2.500-2.500h-5zM3 4h10M3 6.500h10M3 9h6" /></svg></button>
        <button className="w-9 text-center">POR</button>
        <button className="w-[79px] pb-0.5 text-center leading-[17px]">09:39<br />03-01-2017</button>
        <span className="h-10 w-[5px] border-l border-[#555]" />
      </div>
    </footer>
  )
}

export default function App() {
  return (
    <div className="flex min-h-screen flex-col overflow-hidden bg-[#f0f0f0] font-['Open_Sans',sans-serif] select-none">
      <Header />
      <Ribbon />
      <div className="flex flex-1">
        <ModelBrowser />
        <DocumentArea />
      </div>
      <div className="flex h-[25px] items-center bg-linear-to-b from-white to-[#b0b0b0] pt-px text-[11px] text-[#1f2937]">
        <span className="flex-1 pl-px">Ready</span>
        <span className="h-[22px] w-10 border-l border-[#c9c9c9] pl-2.5 leading-[22px]">0</span>
        <span className="h-[22px] w-10 border-l border-[#c9c9c9] pl-2.5 leading-[22px]">1</span>
      </div>
      <Taskbar />
    </div>
  )
}
